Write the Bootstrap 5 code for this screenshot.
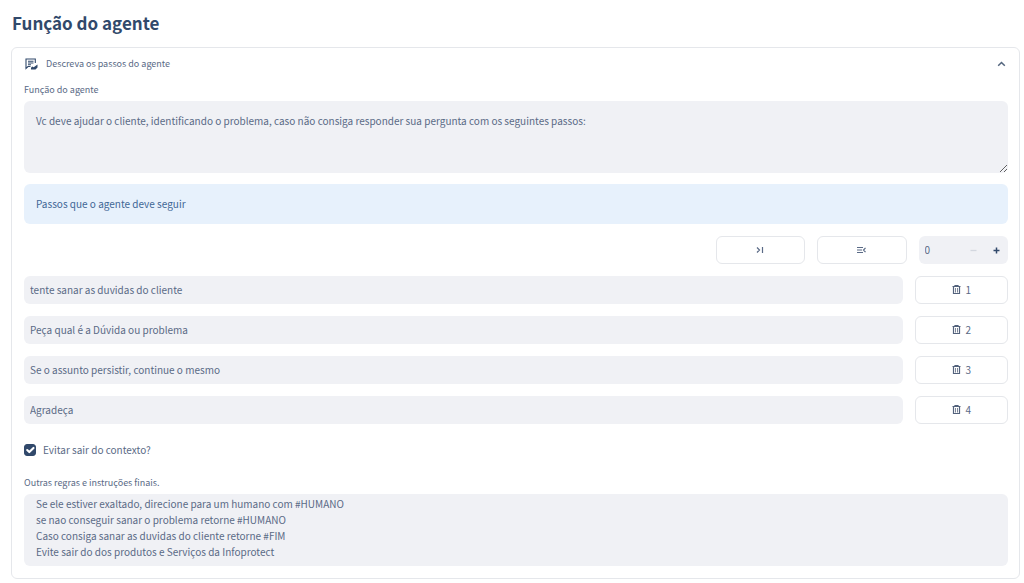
<!DOCTYPE html>
<html lang="pt-BR">
<head>
<meta charset="utf-8">
<meta name="viewport" content="width=device-width, initial-scale=1">
<title>Função do agente</title>
<link href="https://cdn.jsdelivr.net/npm/bootstrap@5.3.0/dist/css/bootstrap.min.css" rel="stylesheet">
<style>
  :root { --ink: #31496b; --text: #5a6a86; --field: #f0f1f5; --line: #e5e7eb; }
  body { font-family: "Noto Sans CJK SC", "Noto Sans", sans-serif; font-size: 10px; line-height: 16px; color: var(--text); background: #fff; }
  .page { padding: 7px 4px 4px 11px; }
  .page-title { font-size: 17px; line-height: 32px; font-weight: 700; color: var(--ink); margin-bottom: 8px; padding-left: 1px; }
  .panel { border: 1px solid var(--line); border-radius: 6px; padding: 8px 11px 12px 12px; }
  .panel-toggle { font-size: 9px; color: var(--text); background: none; border: 0; padding: 0 2px 0 1px; margin-bottom: 10px; }
  .field-label { display: block; font-size: 9px; line-height: 16px; margin-bottom: 3px; }
  .field, .field:focus { font-size: 10px; line-height: 16px; color: var(--text); background: var(--field); border: 0; border-radius: 6px; box-shadow: none; }
  textarea.field { height: 72px; padding: 12px; overflow: hidden; resize: vertical; }
  textarea.field.rules { padding: 2px 12px; resize: none; }
  input.field { height: 28px; padding: 5px 6px 7px; }
  .notice { background: #e7f1fc; color: #3f6796; border-radius: 6px; padding: 12px; margin: 11px 0 12px; }
  .tools, .step { display: grid; column-gap: 12px; align-items: center; margin-bottom: 12px; }
  .tools { grid-template-columns: 38fr 5fr 5fr 5fr; }
  .step { grid-template-columns: 19fr 2fr; }
  .tools > :first-child { grid-column-start: 2; }
  .btn-outline { --bs-btn-border-color: #e5e7eb; --bs-btn-color: #5a6a86; --bs-btn-hover-border-color: #31496b; --bs-btn-font-size: 10px; --bs-btn-border-radius: 6px; --bs-btn-padding-y: 0; height: 28px; line-height: 16px; }
  .counter { background: var(--field); border-radius: 6px; height: 28px; }
  .counter input { width: 50%; min-width: 0; border: 0; background: none; padding: 0 0 0 6px; color: var(--text); outline: 0; }
  .counter button { border: 0; background: none; padding: 0 8px; color: var(--ink); line-height: 0; }
  .counter button:disabled { color: #d3d7df; }
  .form-check-input.ctx { width: 12px; height: 12px; margin: 0; border-radius: 3px; }
  .form-check-input.ctx:checked { background-color: var(--ink); border-color: var(--ink); background-size: 14px 14px; }
  .ctx-row { padding: 6px 0; margin-bottom: 11px; gap: 7px; }
</style>
</head>
<body>
<main class="page">
  <h1 class="page-title">Função do agente</h1>
  <section class="panel">
    <button type="button" class="panel-toggle d-flex align-items-center w-100" aria-expanded="true">
      <svg width="13" height="12" viewBox="0 0 13 12" fill="none" stroke="#31496b" stroke-width="1.1" aria-hidden="true"><path d="M5.500 8.500H3L1 10.500V1H10.300V5M3 3.200H8.500M3 5H8.500M3 6.800H6"/><path d="M6 11.500V9.700L7.200 8.500L8.700 9.200L12.500 6.500V9.500L10.500 11.500Z" fill="#31496b" stroke="none"/></svg>
      <span class="ms-1 ps-1">Descreva os passos do agente</span>
      <svg class="ms-auto" width="9" height="6" viewBox="0 0 9 6" fill="none" stroke="#53657e" stroke-width="1.500" aria-hidden="true"><path d="M1.200 4.800L4.500 1.500L7.800 4.800"/></svg>
    </button>

    <label class="field-label" for="role">Função do agente</label>
    <textarea class="form-control field" id="role">Vc deve ajudar o cliente, identificando o problema, caso não consiga responder sua pergunta com os seguintes passos:</textarea>

    <div class="notice" role="note">Passos que o agente deve seguir</div>

    <div class="tools">
      <button type="button" class="btn btn-outline d-flex align-items-center justify-content-center" aria-label="Adicionar ao final">
        <svg width="8" height="8" viewBox="0 0 8 8" fill="none" stroke="#5a6a86" stroke-width="1.200"><path d="M1 1.500L3.500 4L1 6.500M6.500 1V7"/></svg>
      </button>
      <button type="button" class="btn btn-outline d-flex align-items-center justify-content-center" aria-label="Inserir passo">
        <svg width="9" height="8" viewBox="0 0 9 8" fill="none" stroke="#5a6a86" stroke-width="1.200"><path d="M0 1.500H6M0 4H5M0 6.500H6M8.500 1.800L6.500 4L8.500 6.200"/></svg>
      </button>
      <div class="counter d-flex align-items-center">
        <input type="text" inputmode="numeric" value="0" aria-label="Posição">
        <button type="button" class="ms-auto" disabled aria-label="Diminuir"><svg width="7" height="7" viewBox="0 0 7 7" stroke="currentColor" stroke-width="1.300"><path d="M0.500 3.500H6.500"/></svg></button>
        <button type="button" aria-label="Aumentar"><svg width="7" height="7" viewBox="0 0 7 7" stroke="currentColor" stroke-width="1.500"><path d="M0.500 3.500H6.500M3.500 0.500V6.500"/></svg></button>
      </div>
    </div>

    <svg class="d-none" aria-hidden="true"><symbol id="trash" viewBox="0 0 9 10"><path d="M0.500 1.500H8.500M3 1V0.500H6V1M1.500 1.500V8.500H7.500V1.500" fill="none" stroke="#53627c" stroke-width="1.200"/><path d="M3.500 3V7.500M5.500 3V7.500" stroke="#7e8799"/></symbol></svg>

    <div class="step">
      <input class="form-control field" type="text" aria-label="Passo 1" value="tente sanar as duvidas do cliente">
      <button type="button" class="btn btn-outline d-flex align-items-center justify-content-center gap-1"><svg width="9" height="10" aria-hidden="true"><use href="#trash"/></svg>1</button>
    </div>
    <div class="step">
      <input class="form-control field" type="text" aria-label="Passo 2" value="Peça qual é a Dúvida ou problema">
      <button type="button" class="btn btn-outline d-flex align-items-center justify-content-center gap-1"><svg width="9" height="10" aria-hidden="true"><use href="#trash"/></svg>2</button>
    </div>
    <div class="step">
      <input class="form-control field" type="text" aria-label="Passo 3" value="Se o assunto persistir, continue o mesmo">
      <button type="button" class="btn btn-outline d-flex align-items-center justify-content-center gap-1"><svg width="9" height="10" aria-hidden="true"><use href="#trash"/></svg>3</button>
    </div>
    <div class="step">
      <input class="form-control field" type="text" aria-label="Passo 4" value="Agradeça">
      <button type="button" class="btn btn-outline d-flex align-items-center justify-content-center gap-1"><svg width="9" height="10" aria-hidden="true"><use href="#trash"/></svg>4</button>
    </div>

    <div class="ctx-row d-flex align-items-center">
      <input class="form-check-input ctx" type="checkbox" id="ctx" checked>
      <label for="ctx">Evitar sair do contexto?</label>
    </div>

    <label class="field-label" for="rules">Outras regras e instruções finais.</label>
    <textarea class="form-control field rules" id="rules">Se ele estiver exaltado, direcione para um humano com #HUMANO
se nao conseguir sanar o problema retorne #HUMANO
Caso consiga sanar as duvidas do cliente retorne #FIM
Evite sair do dos produtos e Serviços da Infoprotect</textarea>
  </section>
</main>
<script src="https://cdn.jsdelivr.net/npm/bootstrap@5.3.0/dist/js/bootstrap.bundle.min.js"></script>
</body>
</html>
